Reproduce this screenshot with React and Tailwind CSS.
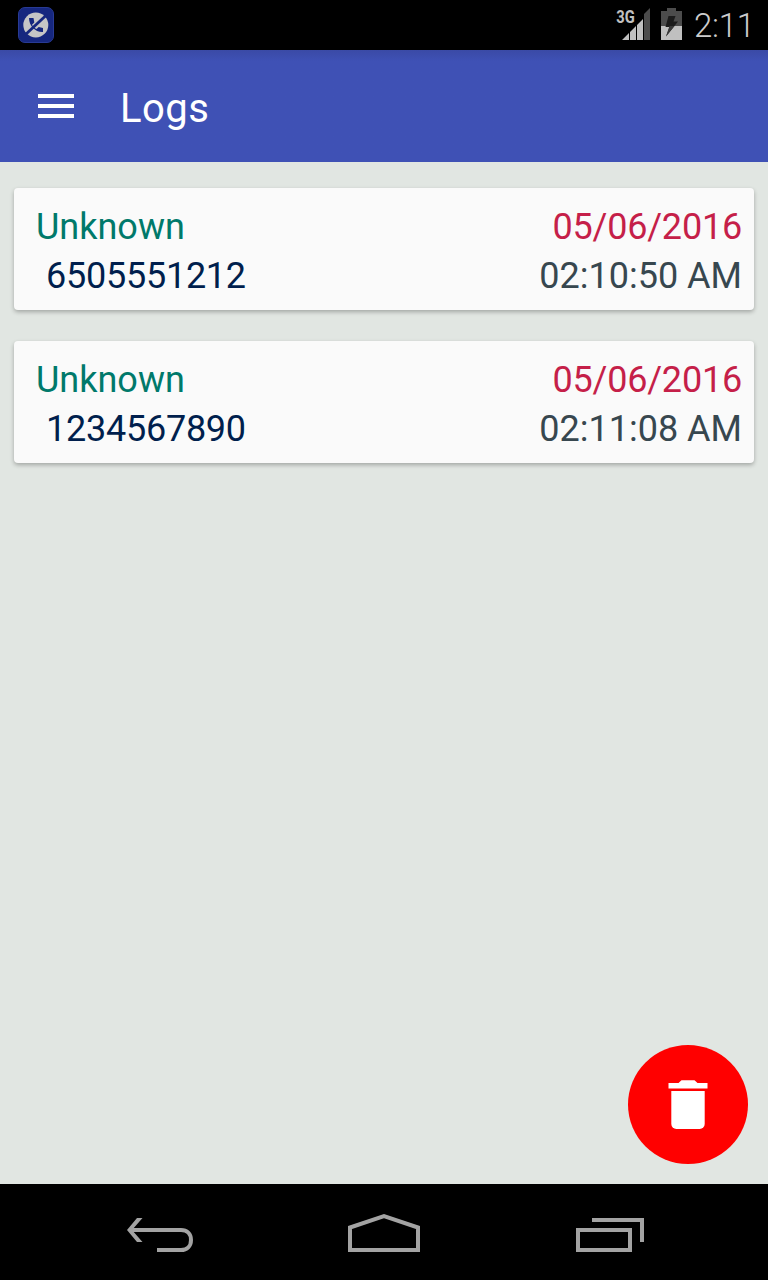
import React from "react";

const logs = [
  { id: 1, name: "Unknown", number: "6505551212", date: "05/06/2016", time: "02:10:50 AM" },
  { id: 2, name: "Unknown", number: "1234567890", date: "05/06/2016", time: "02:11:08 AM" },
];

const BlockedCallIcon = () => (
  <svg width="36" height="36" viewBox="0 0 36 36">
    <rect x="0.5" y="0.5" width="35" height="35" rx="6.5" fill="#16277f" stroke="#283a94" />
    <circle cx="17.8" cy="18" r="12.5" fill="#c6c6c6" />
    <path
      d="M11 11h4.5l0.800 4.500-2.300 2.200c1.200 2.300 2.400 3.300 4.500 4.300l2.200-2 4.300 1v4c-7.500 0.500-14-6-14-14z"
      fill="#16277f"
    />
    <path d="M7 28L29 7.500" stroke="#16277f" strokeWidth="2.8" />
  </svg>
);

const SignalIcon = () => (
  <svg width="36" height="34" viewBox="0 0 36 34">
    <text
      x="0.3"
      y="17"
      fontSize="19"
      fontWeight="700"
      fill="#c0c0c0"
      textLength="18.5"
      lengthAdjust="spacingAndGlyphs"
    >
      3G
    </text>
    <path d="M6 34l7-7v7zM14 26l6-6v14h-6zM21 19l6-6v21h-6z" fill="#c0c0c0" />
    <path d="M28 8l6-6v32h-6z" fill="#4c4c4c" />
  </svg>
);

const BatteryIcon = () => (
  <svg width="21" height="32" viewBox="0 0 21 32">
    <path d="M6 0h9v3h6v15H0V3h6z" fill="#4c4c4c" />
    <path d="M0 18h21v14H0z" fill="#c0c0c0" />
    <path d="M7.5 8h7l-2 5.5h4.5L5 28.5l3.500-9.500h-4z" fill="#1c1c1c" />
    <path d="M8.5 18h5L5 28.5z" fill="#3a3a3a" />
  </svg>
);

const StatusBar = () => (
  <div className="flex h-[50px] items-center bg-black pl-[18px] pr-[14px]">
    <BlockedCallIcon />
    <div className="ml-auto flex items-start">
      <SignalIcon />
      <div className="ml-[9px] pt-[2px]">
        <BatteryIcon />
      </div>
      <span className="ml-[12px] w-[60px] pt-[1px] text-[33px] leading-[37px] font-light tracking-[-0.3px] whitespace-nowrap text-[#cccccc]">
        2:11
      </span>
    </div>
  </div>
);

const Toolbar = () => (
  <header className="flex h-[112px] items-center bg-[#3f51b5] bg-linear-to-b from-[#3a4aa6] to-[#3f51b5] to-[10%] pl-[38px]">
    <button className="flex w-9 flex-col gap-[6px]" aria-label="Menu">
      <span className="h-1 w-full bg-white" />
      <span className="h-1 w-full bg-white" />
      <span className="h-1 w-full bg-white" />
    </button>
    <h1 className="ml-[46px] mt-[6px] text-[40px] leading-[48px] tracking-[0.5px] text-white">
      Logs
    </h1>
  </header>
);

const LogCard = ({ log }) => (
  <div className="flex h-[122px] justify-between rounded-[4px] bg-[#fafafa] pt-[15px] pr-[12px] pl-[22px] text-[36px] leading-[49px] shadow-[0_2px_4px_rgba(0,0,0,0.28)]">
    <div>
      <p className="text-[#00796b]">{log.name}</p>
      <p className="pl-[10px] tracking-[-0.25px] text-[#001f4d]">{log.number}</p>
    </div>
    <div className="text-right">
      <p className="tracking-[-0.2px] text-[#c51f49]">{log.date}</p>
      <p className="text-[#37474f]">{log.time}</p>
    </div>
  </div>
);

const DeleteButton = () => (
  <button
    className="flex h-[119px] w-[120px] items-center justify-center rounded-[50%] bg-[#ff0000]"
    aria-label="Delete logs"
  >
    <svg width="40" height="50" viewBox="0 0 40 50" fill="#fff">
      <path d="M0.5 3h10l3-2.8h13l3 2.8h10v5.6h-39z" />
      <path d="M3.3 11h33.4v33a5 5 0 0 1-5 5H8.3a5 5 0 0 1-5-5z" />
    </svg>
  </button>
);

const NavigationBar = () => (
  <nav className="flex h-24 items-center justify-between bg-black px-[124px]">
    <svg width="72" height="40" viewBox="0 0 72 40" fill="none" stroke="#a3a3a3" strokeWidth="4">
      <path d="M6 18h51c6 0 10 4 10 10s-4 10-10 10H33" />
      <path d="M8 18l10.5-12h-5.5L3 18l10 12h5.5z" fill="#a3a3a3" stroke="none" />
    </svg>
    <svg width="72" height="40" viewBox="0 0 72 40" fill="none" stroke="#a3a3a3" strokeWidth="4">
      <path d="M2 38V15.5L36 4.2l34 11.3V38z" />
    </svg>
    <svg width="72" height="40" viewBox="0 0 72 40" fill="none" stroke="#a3a3a3" strokeWidth="4">
      <path d="M6 18h52v20H6zM20 8h50v22" />
    </svg>
  </nav>
);

export default function App() {
  return (
    <div className="flex h-[1280px] w-[768px] flex-col overflow-hidden bg-[#e1e6e2] font-['Roboto',sans-serif]">
      <StatusBar />
      <Toolbar />
      <main className="flex flex-1 flex-col px-[14px] pt-[26px]">
        <div className="flex flex-col gap-[31px]">
          {logs.map((log) => (
            <LogCard key={log.id} log={log} />
          ))}
        </div>
        <div className="mt-auto mr-[6px] mb-[20px] self-end">
          <DeleteButton />
        </div>
      </main>
      <NavigationBar />
    </div>
  );
}
